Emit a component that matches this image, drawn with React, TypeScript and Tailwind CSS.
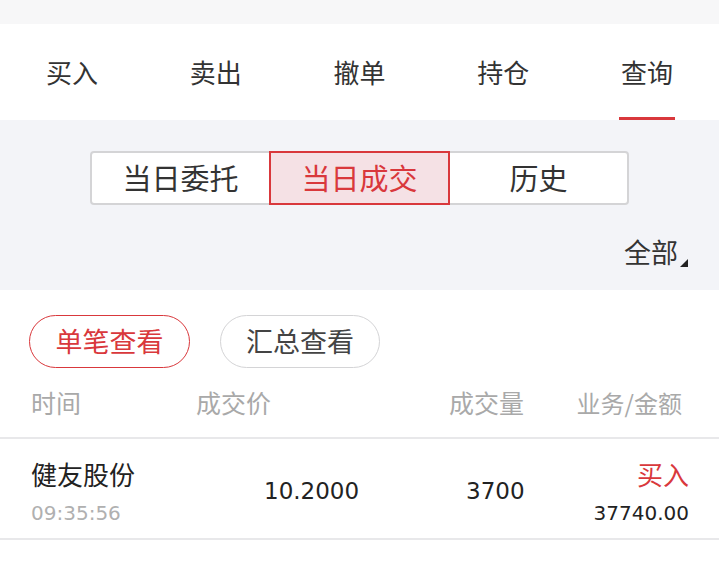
import React from "react";

const tabs = ["买入", "卖出", "撤单", "持仓", "查询"];
const segments = ["当日委托", "当日成交", "历史"];
const num = { fontFamily: '"DejaVu Sans", sans-serif' };

export default function App() {
  return (
    <div
      className="w-[719px] h-[562px] bg-white overflow-hidden"
      style={{ fontFamily: '"Noto Sans CJK SC", "Noto Sans", sans-serif' }}
    >
      {/* status strip */}
      <div className="h-[24px] bg-[#f7f7f8]" />

      {/* top tabs */}
      <div className="grid grid-cols-5 h-[96px] bg-white">
        {tabs.map((t, i) => (
          <div key={t} className="relative flex items-center justify-center">
            <span className="text-[26px] text-[#333] leading-none">{t}</span>
            {i === 4 && (
              <div className="absolute bottom-0 left-1/2 -translate-x-1/2 w-[56px] h-[3px] bg-[#d9383c]" />
            )}
          </div>
        ))}
      </div>

      {/* filter area */}
      <div className="h-[170px] bg-[#f3f4f8] pt-[31px]">
        <div className="mx-auto w-[539px] h-[54px] flex bg-white border-2 border-[#d4d4d6] rounded-[4px]">
          {segments.map((s, i) => (
            <div
              key={s}
              className={
                i === 1
                  ? "flex-1 -my-[2px] flex items-center justify-center border-2 border-[#d9383c] bg-[#f5e1e5] text-[#d9383c] text-[29px]"
                  : "flex-1 flex items-center justify-center text-[#333] text-[29px]"
              }
            >
              {s}
            </div>
          ))}
        </div>
        <div className="flex justify-end pr-[31px] mt-[33px]">
          <div className="relative text-[27px] text-[#333] leading-none pr-[10px]">
            全部
            <svg className="absolute right-0 bottom-[-2px]" width="8" height="8" viewBox="0 0 8 8">
              <polygon points="8,0 8,8 0,8" fill="#222" />
            </svg>
          </div>
        </div>
      </div>

      {/* pills */}
      <div className="flex gap-[30px] pl-[29px] pt-[25px]">
        <div className="w-[161px] h-[53px] rounded-full border border-[#d9383c] flex items-center justify-center text-[#d9383c] text-[27px]">
          单笔查看
        </div>
        <div className="w-[160px] h-[53px] rounded-full border border-[#d4d4d6] flex items-center justify-center text-[#444] text-[27px]">
          汇总查看
        </div>
      </div>

      {/* column headers */}
      <div className="flex items-center h-[71px] pl-[31px] text-[25px] text-[#a9a9a9] border-b-2 border-[#e8e8ea]">
        <div className="w-[165px]">时间</div>
        <div className="w-[252px]">成交价</div>
        <div className="w-[76px] text-right">成交量</div>
        <div className="ml-auto pr-[37px] text-[24px]">业务/金额</div>
      </div>

      {/* data row */}
      <div className="flex items-center h-[101px] pt-[6px] pl-[31px] border-b-2 border-[#e8e8ea]">
        <div className="w-[233px] flex flex-col">
          <span className="text-[26px] text-[#222] leading-none">健友股份</span>
          <span className="text-[20px] text-[#b0b0b0] leading-none mt-[16px]" style={num}>
            09:35:56
          </span>
        </div>
        <div className="w-[202px] text-[23px] text-[#222]" style={num}>
          10.2000
        </div>
        <div className="w-[58px] text-right text-[23px] text-[#222]" style={num}>
          3700
        </div>
        <div className="ml-auto pr-[30px] flex flex-col items-end">
          <span className="text-[26px] text-[#d9383c] leading-none">买入</span>
          <span className="text-[20px] text-[#222] leading-none mt-[16px]" style={num}>
            37740.00
          </span>
        </div>
      </div>
    </div>
  );
}
